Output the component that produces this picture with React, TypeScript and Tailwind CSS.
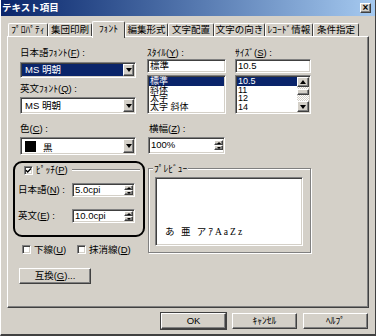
import type { ReactNode } from 'react';

const sunken =
  'border border-t-[#808080] border-l-[#808080] border-r-white border-b-white shadow-[inset_1px_1px_0_#404040,inset_-1px_-1px_0_#d4d0c8]';
const raised =
  'border border-t-white border-l-white border-r-[#404040] border-b-[#404040] shadow-[inset_-1px_-1px_0_#808080]';

function Tri({ up = false, big = false }: { up?: boolean; big?: boolean }) {
  if (big) {
    return (
      <span
        className={
          up
            ? 'w-0 h-0 border-x-[3px] border-b-[4px] border-x-transparent border-b-black'
            : 'w-0 h-0 border-x-[3px] border-t-[4px] border-x-transparent border-t-black'
        }
      />
    );
  }
  return (
    <span
      className={
        up
          ? 'w-0 h-0 border-x-[2px] border-b-[2px] border-x-transparent border-b-black'
          : 'w-0 h-0 border-x-[2px] border-t-[2px] border-x-transparent border-t-black'
      }
    />
  );
}

function DropBtn() {
  return (
    <div className={`${raised} w-[11px] h-full bg-[#d4d0c8] flex items-center justify-center shrink-0`}>
      <Tri big />
    </div>
  );
}

function Spin() {
  return (
    <div className="flex flex-col w-[9px] h-full shrink-0">
      <div className={`${raised} flex-1 bg-[#d4d0c8] flex items-center justify-center`}>
        <Tri up />
      </div>
      <div className={`${raised} flex-1 bg-[#d4d0c8] flex items-center justify-center`}>
        <Tri />
      </div>
    </div>
  );
}

function Label({ children, className = '' }: { children: ReactNode; className?: string }) {
  return <div className={`h-[13px] flex items-center whitespace-nowrap ${className}`}>{children}</div>;
}

function Check({ checked = false }: { checked?: boolean }) {
  return (
    <div className={`${sunken} w-[9px] h-[9px] bg-white shrink-0 flex items-center justify-center`}>
      {checked && (
        <svg width="7" height="7" viewBox="0 0 7 7" className="block">
          <path d="M1 3.2 L2.7 5 L6 1.6" fill="none" stroke="#000" strokeWidth="1.4" />
        </svg>
      )}
    </div>
  );
}

function SpinField({ value }: { value: string }) {
  return (
    <div className={`${sunken} w-[63px] h-[14px] bg-white flex p-[1px]`}>
      <div className="flex-1 flex items-center pl-[1px]">{value}</div>
      <Spin />
    </div>
  );
}

function Button({ children, className = '' }: { children: ReactNode; className?: string }) {
  return (
    <div className={`${raised} h-[16px] bg-[#d4d0c8] flex items-center justify-center ${className}`}>{children}</div>
  );
}

const tabs = [
  { label: 'ﾌﾟﾛﾊﾟﾃｨ', w: 'w-[40px]' },
  { label: '集団印刷', w: 'w-[44px]' },
  { label: 'ﾌｫﾝﾄ', w: 'w-[33px]', active: true },
  { label: '編集形式', w: 'w-[43px]' },
  { label: '文字配置', w: 'w-[46px]' },
  { label: '文字の向き', w: 'w-[51px]' },
  { label: 'ﾚｺｰﾄﾞ情報', w: 'w-[48px]' },
  { label: '条件指定', w: 'w-[46px]' },
];

const styles = ['標準', '斜体', '太字', '太字 斜体'];
const sizes = ['10.5', '11', '12', '14'];

export default function App() {
  return (
    <div className="w-[376px] h-[336px] bg-[#d4d0c8] text-black text-[9.5px] leading-none font-['Liberation_Sans','Noto_Sans_CJK_JP',sans-serif] border-l border-l-white border-r border-r-[#404040] border-b-2 border-b-[#404040] flex flex-col overflow-hidden select-none">
      {/* Title bar */}
      <div className="h-[16px] shrink-0 flex items-center bg-gradient-to-r from-[#0a246a] to-[#a6caf0] pl-[1px] pr-[4px]">
        <span className="text-white font-bold text-[9.5px] font-['Noto_Sans_CJK_JP',sans-serif]">テキスト項目</span>
        <div className={`${raised} ml-auto w-[11px] h-[10px] bg-[#d4d0c8] flex items-center justify-center text-[10px] font-bold`}>
          ×
        </div>
      </div>

      <div className="pl-[6px] flex flex-col">
        {/* Tabs */}
        <div className="mt-[5px] h-[15px] flex items-end ml-[1px]">
          {tabs.map((t) =>
            t.active ? (
              <div
                key={t.label}
                className={`${t.w} h-[17px] -mb-[2px] relative z-10 bg-[#d4d0c8] border-t border-l border-t-white border-l-white border-r border-r-[#404040] rounded-t-[2px] flex items-center justify-center pb-[2px] whitespace-nowrap`}
              >
                {t.label}
              </div>
            ) : (
              <div
                key={t.label}
                className={`${t.w} h-[13px] border-t border-l border-t-white border-l-white border-r border-r-[#404040] rounded-t-[2px] flex items-center justify-center whitespace-nowrap`}
              >
                {t.label}
              </div>
            )
          )}
        </div>

        {/* Panel */}
        <div className="w-[362px] h-[272px] border-t border-l border-t-white border-l-white border-r border-b border-r-[#404040] border-b-[#404040] shadow-[inset_-1px_-1px_0_#808080] flex flex-col">
          {/* Fonts, style, size */}
          <div className="mt-[9px] ml-[12px] flex">
            <div className="w-[116px] flex flex-col">
              <Label>
                日本語ﾌｫﾝﾄ(<u>F</u>) :
              </Label>
              <div className={`${sunken} mt-[3px] h-[16px] bg-white flex p-[1px]`}>
                <div className="flex-1 bg-[#0a246a] text-white flex items-center pl-[3px]">MS 明朝</div>
                <DropBtn />
              </div>
              <Label className="mt-[4px]">
                英文ﾌｫﾝﾄ(<u>Q</u>) :
              </Label>
              <div className={`${sunken} mt-[2px] h-[17px] bg-white flex p-[1px]`}>
                <div className="flex-1 flex items-center pl-[3px]">MS 明朝</div>
                <DropBtn />
              </div>
            </div>

            <div className="ml-[11px] w-[79px] flex flex-col">
              <Label>
                ｽﾀｲﾙ(<u>Y</u>) :
              </Label>
              <div className={`${sunken} h-[14px] bg-white flex items-center pl-[2px]`}>標準</div>
              <div className={`${sunken} mt-[2px] h-[39px] bg-white p-[1px] flex flex-col overflow-hidden`}>
                {styles.map((s, i) => (
                  <div
                    key={s}
                    className={`h-[8.5px] shrink-0 text-[9px] leading-[8.5px] pl-[1px] whitespace-nowrap ${i === 0 ? 'bg-[#0a246a] text-white' : ''}`}
                  >
                    {s}
                  </div>
                ))}
              </div>
            </div>

            <div className="ml-[9px] w-[76px] flex flex-col">
              <Label>
                ｻｲｽﾞ(<u>S</u>) :
              </Label>
              <div className={`${sunken} h-[14px] bg-white flex items-center pl-[2px]`}>10.5</div>
              <div className={`${sunken} mt-[2px] h-[39px] bg-white p-[1px] flex overflow-hidden`}>
                <div className="flex-1 flex flex-col">
                  {sizes.map((s, i) => (
                    <div
                      key={s}
                      className={`h-[8.5px] shrink-0 text-[9px] leading-[8.5px] pl-[1px] ${i === 0 ? 'bg-[#0a246a] text-white' : ''}`}
                    >
                      {s}
                    </div>
                  ))}
                </div>
                {/* Scrollbar */}
                <div className="w-[12px] flex flex-col">
                  <div className={`${raised} h-[10px] bg-[#d4d0c8] flex items-center justify-center`}>
                    <Tri up big />
                  </div>
                  <div className="flex-1 bg-[repeating-conic-gradient(#ffffff_0_25%,#d4d0c8_0_50%)] bg-size-[2px_2px]">
                    <div className={`${raised} mt-[2px] h-[6px] bg-[#d4d0c8]`} />
                  </div>
                  <div className={`${raised} h-[11px] bg-[#d4d0c8] flex items-center justify-center`}>
                    <Tri big />
                  </div>
                </div>
              </div>
            </div>
          </div>

          {/* Colour and width */}
          <div className="mt-[8px] ml-[12px] flex">
            <div className="w-[116px] flex flex-col">
              <Label>
                色(<u>C</u>) :
              </Label>
              <div className={`${sunken} mt-[2px] h-[18px] bg-white flex p-[1px]`}>
                <div className="flex-1 flex items-center pl-[3px]">
                  <div className="w-[11px] h-[11px] bg-black" />
                  <span className="ml-[7px] mt-[3px]">黒</span>
                </div>
                <DropBtn />
              </div>
            </div>
            <div className="ml-[12px] w-[77px] flex flex-col">
              <Label className="pl-[1px]">
                横幅(<u>Z</u>) :
              </Label>
              <div className={`${sunken} mt-[2px] h-[17px] bg-white flex p-[1px]`}>
                <div className="flex-1 flex items-start pt-[1px] pl-[1px]">100%</div>
                <div className="h-[12px] py-[1px]">
                  <Spin />
                </div>
              </div>
            </div>
          </div>

          {/* Pitch and preview */}
          <div className="mt-[6px] ml-[5px] flex">
            <div className="w-[132px] flex flex-col">
              <div className="h-[76px] border-2 border-black rounded-[9px] flex flex-col">
                <div className="mt-[1px] h-[12px] pl-[9px] flex items-center">
                  <Check checked />
                  <span className="ml-[3px] whitespace-nowrap">
                    ﾋﾟｯﾁ(<u>P</u>)
                  </span>
                  <div className="flex-1 ml-[4px] mr-[3px] h-[2px] border-t border-t-[#808080] border-b border-b-white" />
                </div>
                <div className="mt-[7px] h-[14px] flex items-center">
                  <div className="w-[57px] pl-[3px] whitespace-nowrap">
                    日本語(<u>N</u>) :
                  </div>
                  <SpinField value="5.0cpi" />
                </div>
                <div className="mt-[12px] h-[14px] flex items-center">
                  <div className="w-[57px] pl-[3px] whitespace-nowrap">
                    英文(<u>E</u>) :
                  </div>
                  <SpinField value="10.0cpi" />
                </div>
              </div>
              <div className="mt-[8px] h-[9px] ml-[9px] flex items-center">
                <div className="w-[55px] flex items-center">
                  <Check />
                  <span className="ml-[3px] whitespace-nowrap">
                    下線(<u>U</u>)
                  </span>
                </div>
                <Check />
                <span className="ml-[3px] whitespace-nowrap">
                  抹消線(<u>D</u>)
                </span>
              </div>
            </div>

            <div className="ml-[3px] mt-[7px] w-[163px] h-[85px] relative border border-[#808080] shadow-[inset_1px_1px_0_#ffffff,1px_1px_0_#ffffff]">
              <span className="absolute -top-[5px] left-[4px] px-[1px] bg-[#d4d0c8] whitespace-nowrap">ﾌﾟﾚﾋﾞｭｰ</span>
              <div className={`${sunken} ml-[6px] mt-[8px] w-[148px] h-[69px] bg-white flex items-end pl-[9px] pb-[8px]`}>
                <span className="text-[9.5px] tracking-[2px] font-['Liberation_Serif','Noto_Sans_CJK_JP',serif]">
                  あ 亜 アｱAaZz
                </span>
              </div>
            </div>
          </div>

          <div className="mt-[14px] ml-[11px]">
            <Button className="w-[72px]">
              互換(<u>G</u>)...
            </Button>
          </div>
        </div>

        {/* Dialog buttons */}
        <div className="mt-[5px] w-[362px] pr-[1px] flex justify-end gap-[6px]">
          <Button className="w-[65px] outline outline-[#404040]">OK</Button>
          <Button className="w-[65px]">ｷｬﾝｾﾙ</Button>
          <Button className="w-[65px]">ﾍﾙﾌﾟ</Button>
        </div>
      </div>
    </div>
  );
}
